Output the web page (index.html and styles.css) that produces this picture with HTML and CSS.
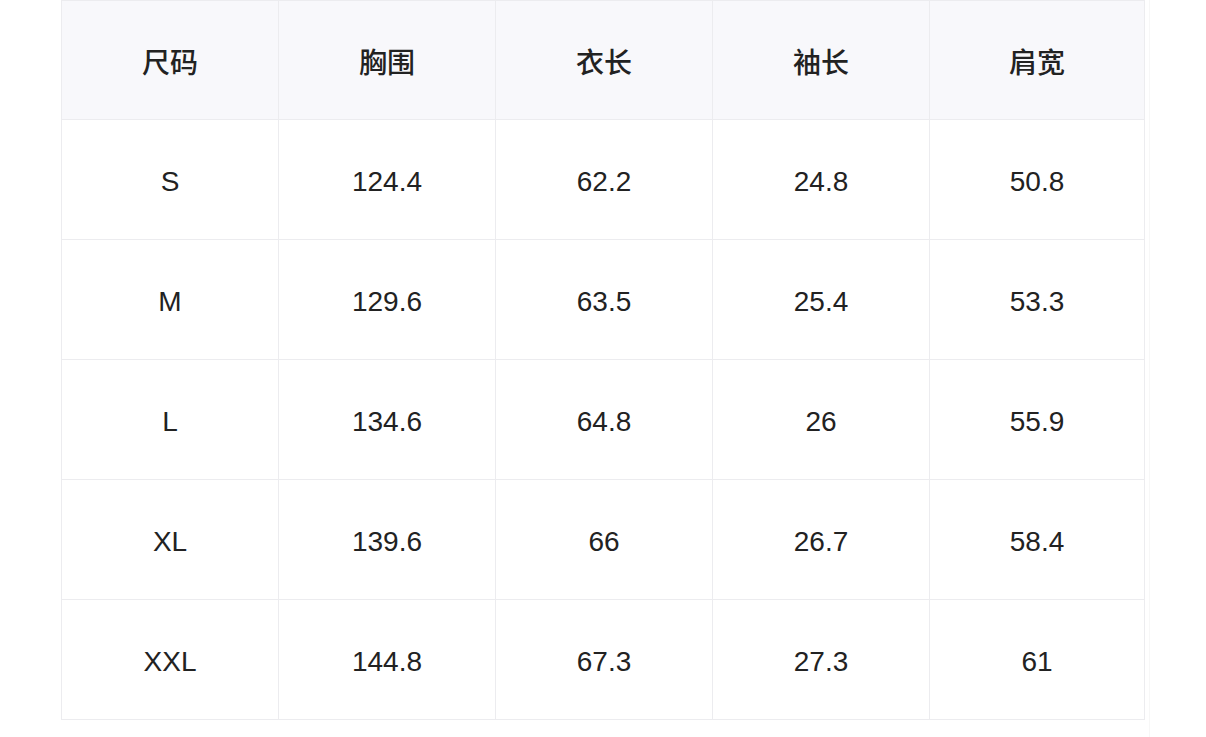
FILE: index.html
```html
<!DOCTYPE html>
<html lang="zh">
<head>
<meta charset="utf-8">
<link rel="stylesheet" href="styles.css">
</head>
<body>
<div class="page">
  <table class="size-table">
    <colgroup>
      <col class="col"><col class="col"><col class="col"><col class="col"><col>
    </colgroup>
    <thead>
      <tr><th>尺码</th><th>胸围</th><th>衣长</th><th>袖长</th><th>肩宽</th></tr>
    </thead>
    <tbody>
      <tr><td>S</td><td>124.4</td><td>62.2</td><td>24.8</td><td>50.8</td></tr>
      <tr><td>M</td><td>129.6</td><td>63.5</td><td>25.4</td><td>53.3</td></tr>
      <tr><td>L</td><td>134.6</td><td>64.8</td><td>26</td><td>55.9</td></tr>
      <tr><td>XL</td><td>139.6</td><td>66</td><td>26.7</td><td>58.4</td></tr>
      <tr><td>XXL</td><td>144.8</td><td>67.3</td><td>27.3</td><td>61</td></tr>
    </tbody>
  </table>
</div>
</body>
</html>
```

FILE: styles.css
```css
html, body {
  margin: 0;
  padding: 0;
  background: #ffffff;
}
.page {
  width: 1150px;
  height: 737px;
  border-right: 1px solid #f7f7f7;
  box-sizing: border-box;
  padding-left: 61px;
  padding-top: 0;
}
.size-table {
  border-collapse: collapse;
  table-layout: fixed;
  width: 1084px;
  font-family: "Liberation Sans", "Noto Sans CJK SC", sans-serif;
  color: #222222;
}
.col {
  width: 217px;
}
.size-table th,
.size-table td {
  border: 1px solid #ececef;
  text-align: center;
  vertical-align: middle;
  padding: 0;
  font-size: 28px;
}
.size-table th {
  height: 116px;
  padding-top: 2px;
  background: #f8f8fb;
  font-family: "Noto Sans CJK SC", sans-serif;
  font-weight: 500;
}
.size-table td {
  height: 115px;
  padding-top: 4px;
  font-weight: 400;
}
```
